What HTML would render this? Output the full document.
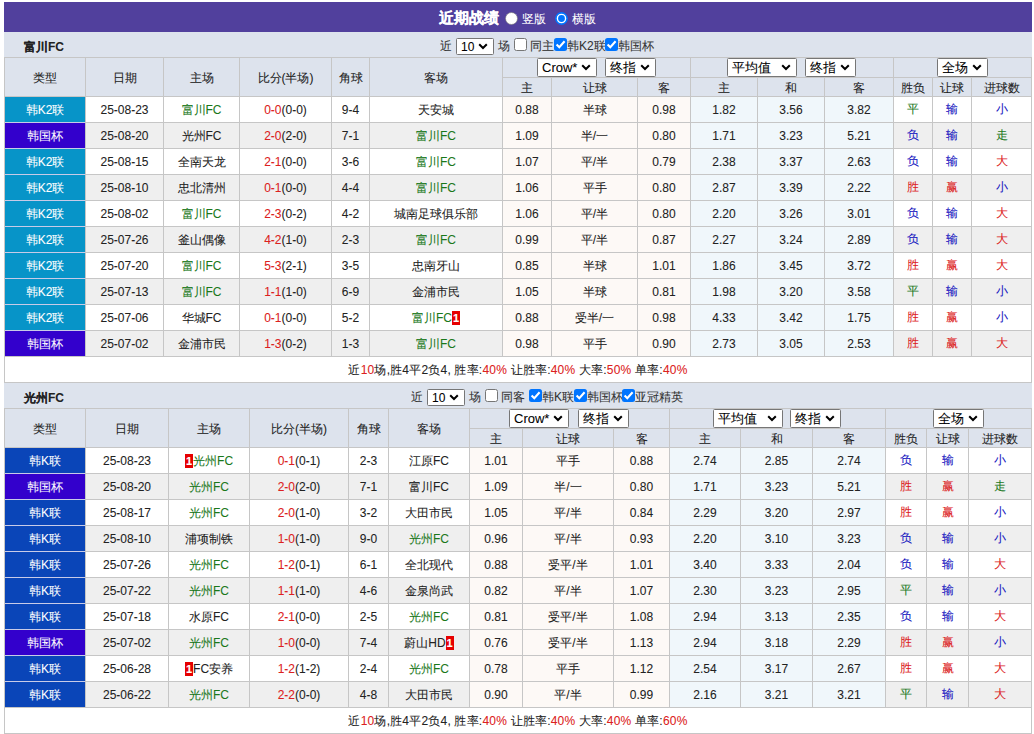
<!DOCTYPE html>
<html><head><meta charset="utf-8"><style>
html,body{margin:0;padding:0;background:#fff;width:1034px;height:734px;overflow:hidden}
body{font-family:"Liberation Sans",sans-serif;font-size:12px;color:#333;position:relative;-webkit-text-stroke:0.07px currentColor}
.a{position:absolute}
.t{position:absolute;white-space:nowrap}
.c{position:absolute;display:flex;align-items:center;justify-content:center;white-space:nowrap;font-size:12px;color:#222;line-height:14px}
.hd{color:#222;padding-top:1px;box-sizing:border-box}
.ty{color:#fff}
.sel{position:absolute;background:#fff;border:1px solid #767676;border-radius:1.5px;color:#000;display:flex;align-items:center;line-height:14px}
.sel span{padding-left:4px;flex:1;white-space:nowrap}
.chev{margin-right:5px}
.bd{display:inline-block;background:#e60000;color:#fff;font-weight:bold;font-size:11px;line-height:14px;height:14px;padding:0 1px}
</style></head><body>

<div class="a" style="left:4px;top:2px;width:1028px;height:30px;background:#51409d;"></div>
<div class="t" style="left:439px;top:9px;color:#fff;font-weight:bold;font-size:15px;line-height:17px;-webkit-text-stroke:0.2px #fff">近期战绩</div>
<svg class="a" style="left:505px;top:12px" width="13" height="13" viewBox="0 0 13 13"><circle cx="6.5" cy="6.5" r="6" fill="#fff" stroke="#767676" stroke-width="0.6"/></svg>
<div class="t" style="left:522px;top:12px;color:#fff;font-size:12px;line-height:14px">竖版</div>
<svg class="a" style="left:555px;top:12px" width="13" height="13" viewBox="0 0 13 13"><circle cx="6.5" cy="6.5" r="5.6" fill="#fff" stroke="#0075ff" stroke-width="1.6"/><circle cx="6.5" cy="6.5" r="3.4" fill="#0075ff"/></svg>
<div class="t" style="left:572px;top:12px;color:#fff;font-size:12px;line-height:14px">横版</div>
<div class="a" style="left:4px;top:32px;width:1028px;height:25px;background:#dde3ed;"></div>
<div class="t" style="left:24px;top:39px;font-weight:bold;font-size:12px;line-height:16px;color:#222">富川FC</div>
<div class="t" style="left:440px;top:39px;font-size:12px;line-height:14px">近</div><div class="sel" style="left:456px;top:38px;width:36px;height:15px;font-size:12px"><span>10</span><svg class="chev" width="10" height="7" viewBox="0 0 10 7"><path d="M1.2 1.2 L5 5 L8.8 1.2" fill="none" stroke="#000" stroke-width="2"/></svg></div><div class="t" style="left:498px;top:39px;font-size:12px;line-height:14px">场</div><svg class="a" style="left:514px;top:38px" width="13" height="13" viewBox="0 0 13 13"><rect x="0.5" y="0.5" width="12" height="12" rx="2" fill="#fff" stroke="#767676" stroke-width="1"/></svg><div class="t" style="left:530px;top:39px;font-size:12px;line-height:14px">同主</div><svg class="a" style="left:554px;top:38px" width="13" height="13" viewBox="0 0 13 13"><rect x="0" y="0" width="13" height="13" rx="2.5" fill="#0075ff"/><path d="M2.6 6.4 L5.3 9.2 L10.6 3.2" fill="none" stroke="#fff" stroke-width="2.1"/></svg><div class="t" style="left:567px;top:39px;font-size:12px;line-height:14px">韩K2联</div><svg class="a" style="left:605px;top:38px" width="13" height="13" viewBox="0 0 13 13"><rect x="0" y="0" width="13" height="13" rx="2.5" fill="#0075ff"/><path d="M2.6 6.4 L5.3 9.2 L10.6 3.2" fill="none" stroke="#fff" stroke-width="2.1"/></svg><div class="t" style="left:618px;top:39px;font-size:12px;line-height:14px">韩国杯</div>
<div class="a" style="left:4px;top:57px;width:1028px;height:40px;background:#dde3ed;"></div>
<div class="c hd" style="left:5px;top:58px;width:80px;height:38px;"><span>类型</span></div>
<div class="c hd" style="left:86px;top:58px;width:77px;height:38px;"><span>日期</span></div>
<div class="c hd" style="left:164px;top:58px;width:75px;height:38px;"><span>主场</span></div>
<div class="c hd" style="left:240px;top:58px;width:91px;height:38px;"><span>比分(半场)</span></div>
<div class="c hd" style="left:332px;top:58px;width:37px;height:38px;"><span>角球</span></div>
<div class="c hd" style="left:370px;top:58px;width:132px;height:38px;"><span>客场</span></div>
<div class="c hd" style="left:503px;top:78px;width:48px;height:18px;"><span>主</span></div>
<div class="c hd" style="left:552px;top:78px;width:85px;height:18px;"><span>让球</span></div>
<div class="c hd" style="left:638px;top:78px;width:52px;height:18px;"><span>客</span></div>
<div class="c hd" style="left:691px;top:78px;width:66px;height:18px;"><span>主</span></div>
<div class="c hd" style="left:758px;top:78px;width:66px;height:18px;"><span>和</span></div>
<div class="c hd" style="left:825px;top:78px;width:68px;height:18px;"><span>客</span></div>
<div class="c hd" style="left:894px;top:78px;width:38px;height:18px;"><span>胜负</span></div>
<div class="c hd" style="left:933px;top:78px;width:38px;height:18px;"><span>让球</span></div>
<div class="c hd" style="left:972px;top:78px;width:59px;height:18px;"><span>进球数</span></div>
<div class="a" style="left:5px;top:97px;width:1026px;height:25px;background:#ffffff;"></div>
<div class="c ty" style="left:5px;top:97px;width:80px;height:25px;background:#0794c8"><span>韩K2联</span></div>
<div class="c" style="left:86px;top:97px;width:77px;height:25px;"><span>25-08-23</span></div>
<div class="c" style="left:164px;top:97px;width:75px;height:25px;"><span><span style="color:#1a781a">富川FC</span></span></div>
<div class="c" style="left:240px;top:97px;width:91px;height:25px;"><span><span style="color:#dc2020">0-0</span>(0-0)</span></div>
<div class="c" style="left:332px;top:97px;width:37px;height:25px;"><span>9-4</span></div>
<div class="c" style="left:370px;top:97px;width:132px;height:25px;"><span><span style="color:#222">天安城</span></span></div>
<div class="c" style="left:503px;top:97px;width:48px;height:25px;background:#fdf9f6;"><span>0.88</span></div>
<div class="c" style="left:552px;top:97px;width:85px;height:25px;background:#fdf9f6;"><span>半球</span></div>
<div class="c" style="left:638px;top:97px;width:52px;height:25px;background:#fdf9f6;"><span>0.98</span></div>
<div class="c" style="left:691px;top:97px;width:66px;height:25px;background:#f0f7fb;"><span>1.82</span></div>
<div class="c" style="left:758px;top:97px;width:66px;height:25px;background:#f0f7fb;"><span>3.56</span></div>
<div class="c" style="left:825px;top:97px;width:68px;height:25px;background:#f0f7fb;"><span>3.82</span></div>
<div class="c" style="left:894px;top:97px;width:38px;height:25px;"><span><span style="color:#1a781a;position:relative;top:-1px">平</span></span></div>
<div class="c" style="left:933px;top:97px;width:38px;height:25px;"><span><span style="color:#1414c0;position:relative;top:-1px">输</span></span></div>
<div class="c" style="left:972px;top:97px;width:59px;height:25px;"><span><span style="color:#1414c0;position:relative;top:-1px">小</span></span></div>
<div class="a" style="left:5px;top:123px;width:1026px;height:25px;background:#efefef;"></div>
<div class="c ty" style="left:5px;top:123px;width:80px;height:25px;background:#3300cc"><span>韩国杯</span></div>
<div class="c" style="left:86px;top:123px;width:77px;height:25px;"><span>25-08-20</span></div>
<div class="c" style="left:164px;top:123px;width:75px;height:25px;"><span><span style="color:#222">光州FC</span></span></div>
<div class="c" style="left:240px;top:123px;width:91px;height:25px;"><span><span style="color:#dc2020">2-0</span>(2-0)</span></div>
<div class="c" style="left:332px;top:123px;width:37px;height:25px;"><span>7-1</span></div>
<div class="c" style="left:370px;top:123px;width:132px;height:25px;"><span><span style="color:#1a781a">富川FC</span></span></div>
<div class="c" style="left:503px;top:123px;width:48px;height:25px;background:#fdf9f6;"><span>1.09</span></div>
<div class="c" style="left:552px;top:123px;width:85px;height:25px;background:#fdf9f6;"><span>半/一</span></div>
<div class="c" style="left:638px;top:123px;width:52px;height:25px;background:#fdf9f6;"><span>0.80</span></div>
<div class="c" style="left:691px;top:123px;width:66px;height:25px;background:#f0f7fb;"><span>1.71</span></div>
<div class="c" style="left:758px;top:123px;width:66px;height:25px;background:#f0f7fb;"><span>3.23</span></div>
<div class="c" style="left:825px;top:123px;width:68px;height:25px;background:#f0f7fb;"><span>5.21</span></div>
<div class="c" style="left:894px;top:123px;width:38px;height:25px;"><span><span style="color:#1414c0;position:relative;top:-1px">负</span></span></div>
<div class="c" style="left:933px;top:123px;width:38px;height:25px;"><span><span style="color:#1414c0;position:relative;top:-1px">输</span></span></div>
<div class="c" style="left:972px;top:123px;width:59px;height:25px;"><span><span style="color:#1a781a;position:relative;top:-1px">走</span></span></div>
<div class="a" style="left:5px;top:149px;width:1026px;height:25px;background:#ffffff;"></div>
<div class="c ty" style="left:5px;top:149px;width:80px;height:25px;background:#0794c8"><span>韩K2联</span></div>
<div class="c" style="left:86px;top:149px;width:77px;height:25px;"><span>25-08-15</span></div>
<div class="c" style="left:164px;top:149px;width:75px;height:25px;"><span><span style="color:#222">全南天龙</span></span></div>
<div class="c" style="left:240px;top:149px;width:91px;height:25px;"><span><span style="color:#dc2020">2-1</span>(0-0)</span></div>
<div class="c" style="left:332px;top:149px;width:37px;height:25px;"><span>3-6</span></div>
<div class="c" style="left:370px;top:149px;width:132px;height:25px;"><span><span style="color:#1a781a">富川FC</span></span></div>
<div class="c" style="left:503px;top:149px;width:48px;height:25px;background:#fdf9f6;"><span>1.07</span></div>
<div class="c" style="left:552px;top:149px;width:85px;height:25px;background:#fdf9f6;"><span>平/半</span></div>
<div class="c" style="left:638px;top:149px;width:52px;height:25px;background:#fdf9f6;"><span>0.79</span></div>
<div class="c" style="left:691px;top:149px;width:66px;height:25px;background:#f0f7fb;"><span>2.38</span></div>
<div class="c" style="left:758px;top:149px;width:66px;height:25px;background:#f0f7fb;"><span>3.37</span></div>
<div class="c" style="left:825px;top:149px;width:68px;height:25px;background:#f0f7fb;"><span>2.63</span></div>
<div class="c" style="left:894px;top:149px;width:38px;height:25px;"><span><span style="color:#1414c0;position:relative;top:-1px">负</span></span></div>
<div class="c" style="left:933px;top:149px;width:38px;height:25px;"><span><span style="color:#1414c0;position:relative;top:-1px">输</span></span></div>
<div class="c" style="left:972px;top:149px;width:59px;height:25px;"><span><span style="color:#dc2020;position:relative;top:-1px">大</span></span></div>
<div class="a" style="left:5px;top:175px;width:1026px;height:25px;background:#efefef;"></div>
<div class="c ty" style="left:5px;top:175px;width:80px;height:25px;background:#0794c8"><span>韩K2联</span></div>
<div class="c" style="left:86px;top:175px;width:77px;height:25px;"><span>25-08-10</span></div>
<div class="c" style="left:164px;top:175px;width:75px;height:25px;"><span><span style="color:#222">忠北清州</span></span></div>
<div class="c" style="left:240px;top:175px;width:91px;height:25px;"><span><span style="color:#dc2020">0-1</span>(0-0)</span></div>
<div class="c" style="left:332px;top:175px;width:37px;height:25px;"><span>4-4</span></div>
<div class="c" style="left:370px;top:175px;width:132px;height:25px;"><span><span style="color:#1a781a">富川FC</span></span></div>
<div class="c" style="left:503px;top:175px;width:48px;height:25px;background:#fdf9f6;"><span>1.06</span></div>
<div class="c" style="left:552px;top:175px;width:85px;height:25px;background:#fdf9f6;"><span>平手</span></div>
<div class="c" style="left:638px;top:175px;width:52px;height:25px;background:#fdf9f6;"><span>0.80</span></div>
<div class="c" style="left:691px;top:175px;width:66px;height:25px;background:#f0f7fb;"><span>2.87</span></div>
<div class="c" style="left:758px;top:175px;width:66px;height:25px;background:#f0f7fb;"><span>3.39</span></div>
<div class="c" style="left:825px;top:175px;width:68px;height:25px;background:#f0f7fb;"><span>2.22</span></div>
<div class="c" style="left:894px;top:175px;width:38px;height:25px;"><span><span style="color:#dc2020;position:relative;top:-1px">胜</span></span></div>
<div class="c" style="left:933px;top:175px;width:38px;height:25px;"><span><span style="color:#dc2020;position:relative;top:-1px">赢</span></span></div>
<div class="c" style="left:972px;top:175px;width:59px;height:25px;"><span><span style="color:#1414c0;position:relative;top:-1px">小</span></span></div>
<div class="a" style="left:5px;top:201px;width:1026px;height:25px;background:#ffffff;"></div>
<div class="c ty" style="left:5px;top:201px;width:80px;height:25px;background:#0794c8"><span>韩K2联</span></div>
<div class="c" style="left:86px;top:201px;width:77px;height:25px;"><span>25-08-02</span></div>
<div class="c" style="left:164px;top:201px;width:75px;height:25px;"><span><span style="color:#1a781a">富川FC</span></span></div>
<div class="c" style="left:240px;top:201px;width:91px;height:25px;"><span><span style="color:#dc2020">2-3</span>(0-2)</span></div>
<div class="c" style="left:332px;top:201px;width:37px;height:25px;"><span>4-2</span></div>
<div class="c" style="left:370px;top:201px;width:132px;height:25px;"><span><span style="color:#222">城南足球俱乐部</span></span></div>
<div class="c" style="left:503px;top:201px;width:48px;height:25px;background:#fdf9f6;"><span>1.06</span></div>
<div class="c" style="left:552px;top:201px;width:85px;height:25px;background:#fdf9f6;"><span>平/半</span></div>
<div class="c" style="left:638px;top:201px;width:52px;height:25px;background:#fdf9f6;"><span>0.80</span></div>
<div class="c" style="left:691px;top:201px;width:66px;height:25px;background:#f0f7fb;"><span>2.20</span></div>
<div class="c" style="left:758px;top:201px;width:66px;height:25px;background:#f0f7fb;"><span>3.26</span></div>
<div class="c" style="left:825px;top:201px;width:68px;height:25px;background:#f0f7fb;"><span>3.01</span></div>
<div class="c" style="left:894px;top:201px;width:38px;height:25px;"><span><span style="color:#1414c0;position:relative;top:-1px">负</span></span></div>
<div class="c" style="left:933px;top:201px;width:38px;height:25px;"><span><span style="color:#1414c0;position:relative;top:-1px">输</span></span></div>
<div class="c" style="left:972px;top:201px;width:59px;height:25px;"><span><span style="color:#dc2020;position:relative;top:-1px">大</span></span></div>
<div class="a" style="left:5px;top:227px;width:1026px;height:25px;background:#efefef;"></div>
<div class="c ty" style="left:5px;top:227px;width:80px;height:25px;background:#0794c8"><span>韩K2联</span></div>
<div class="c" style="left:86px;top:227px;width:77px;height:25px;"><span>25-07-26</span></div>
<div class="c" style="left:164px;top:227px;width:75px;height:25px;"><span><span style="color:#222">釜山偶像</span></span></div>
<div class="c" style="left:240px;top:227px;width:91px;height:25px;"><span><span style="color:#dc2020">4-2</span>(1-0)</span></div>
<div class="c" style="left:332px;top:227px;width:37px;height:25px;"><span>2-3</span></div>
<div class="c" style="left:370px;top:227px;width:132px;height:25px;"><span><span style="color:#1a781a">富川FC</span></span></div>
<div class="c" style="left:503px;top:227px;width:48px;height:25px;background:#fdf9f6;"><span>0.99</span></div>
<div class="c" style="left:552px;top:227px;width:85px;height:25px;background:#fdf9f6;"><span>平/半</span></div>
<div class="c" style="left:638px;top:227px;width:52px;height:25px;background:#fdf9f6;"><span>0.87</span></div>
<div class="c" style="left:691px;top:227px;width:66px;height:25px;background:#f0f7fb;"><span>2.27</span></div>
<div class="c" style="left:758px;top:227px;width:66px;height:25px;background:#f0f7fb;"><span>3.24</span></div>
<div class="c" style="left:825px;top:227px;width:68px;height:25px;background:#f0f7fb;"><span>2.89</span></div>
<div class="c" style="left:894px;top:227px;width:38px;height:25px;"><span><span style="color:#1414c0;position:relative;top:-1px">负</span></span></div>
<div class="c" style="left:933px;top:227px;width:38px;height:25px;"><span><span style="color:#1414c0;position:relative;top:-1px">输</span></span></div>
<div class="c" style="left:972px;top:227px;width:59px;height:25px;"><span><span style="color:#dc2020;position:relative;top:-1px">大</span></span></div>
<div class="a" style="left:5px;top:253px;width:1026px;height:25px;background:#ffffff;"></div>
<div class="c ty" style="left:5px;top:253px;width:80px;height:25px;background:#0794c8"><span>韩K2联</span></div>
<div class="c" style="left:86px;top:253px;width:77px;height:25px;"><span>25-07-20</span></div>
<div class="c" style="left:164px;top:253px;width:75px;height:25px;"><span><span style="color:#1a781a">富川FC</span></span></div>
<div class="c" style="left:240px;top:253px;width:91px;height:25px;"><span><span style="color:#dc2020">5-3</span>(2-1)</span></div>
<div class="c" style="left:332px;top:253px;width:37px;height:25px;"><span>3-5</span></div>
<div class="c" style="left:370px;top:253px;width:132px;height:25px;"><span><span style="color:#222">忠南牙山</span></span></div>
<div class="c" style="left:503px;top:253px;width:48px;height:25px;background:#fdf9f6;"><span>0.85</span></div>
<div class="c" style="left:552px;top:253px;width:85px;height:25px;background:#fdf9f6;"><span>半球</span></div>
<div class="c" style="left:638px;top:253px;width:52px;height:25px;background:#fdf9f6;"><span>1.01</span></div>
<div class="c" style="left:691px;top:253px;width:66px;height:25px;background:#f0f7fb;"><span>1.86</span></div>
<div class="c" style="left:758px;top:253px;width:66px;height:25px;background:#f0f7fb;"><span>3.45</span></div>
<div class="c" style="left:825px;top:253px;width:68px;height:25px;background:#f0f7fb;"><span>3.72</span></div>
<div class="c" style="left:894px;top:253px;width:38px;height:25px;"><span><span style="color:#dc2020;position:relative;top:-1px">胜</span></span></div>
<div class="c" style="left:933px;top:253px;width:38px;height:25px;"><span><span style="color:#dc2020;position:relative;top:-1px">赢</span></span></div>
<div class="c" style="left:972px;top:253px;width:59px;height:25px;"><span><span style="color:#dc2020;position:relative;top:-1px">大</span></span></div>
<div class="a" style="left:5px;top:279px;width:1026px;height:25px;background:#efefef;"></div>
<div class="c ty" style="left:5px;top:279px;width:80px;height:25px;background:#0794c8"><span>韩K2联</span></div>
<div class="c" style="left:86px;top:279px;width:77px;height:25px;"><span>25-07-13</span></div>
<div class="c" style="left:164px;top:279px;width:75px;height:25px;"><span><span style="color:#1a781a">富川FC</span></span></div>
<div class="c" style="left:240px;top:279px;width:91px;height:25px;"><span><span style="color:#dc2020">1-1</span>(1-0)</span></div>
<div class="c" style="left:332px;top:279px;width:37px;height:25px;"><span>6-9</span></div>
<div class="c" style="left:370px;top:279px;width:132px;height:25px;"><span><span style="color:#222">金浦市民</span></span></div>
<div class="c" style="left:503px;top:279px;width:48px;height:25px;background:#fdf9f6;"><span>1.05</span></div>
<div class="c" style="left:552px;top:279px;width:85px;height:25px;background:#fdf9f6;"><span>半球</span></div>
<div class="c" style="left:638px;top:279px;width:52px;height:25px;background:#fdf9f6;"><span>0.81</span></div>
<div class="c" style="left:691px;top:279px;width:66px;height:25px;background:#f0f7fb;"><span>1.98</span></div>
<div class="c" style="left:758px;top:279px;width:66px;height:25px;background:#f0f7fb;"><span>3.20</span></div>
<div class="c" style="left:825px;top:279px;width:68px;height:25px;background:#f0f7fb;"><span>3.58</span></div>
<div class="c" style="left:894px;top:279px;width:38px;height:25px;"><span><span style="color:#1a781a;position:relative;top:-1px">平</span></span></div>
<div class="c" style="left:933px;top:279px;width:38px;height:25px;"><span><span style="color:#1414c0;position:relative;top:-1px">输</span></span></div>
<div class="c" style="left:972px;top:279px;width:59px;height:25px;"><span><span style="color:#1414c0;position:relative;top:-1px">小</span></span></div>
<div class="a" style="left:5px;top:305px;width:1026px;height:25px;background:#ffffff;"></div>
<div class="c ty" style="left:5px;top:305px;width:80px;height:25px;background:#0794c8"><span>韩K2联</span></div>
<div class="c" style="left:86px;top:305px;width:77px;height:25px;"><span>25-07-06</span></div>
<div class="c" style="left:164px;top:305px;width:75px;height:25px;"><span><span style="color:#222">华城FC</span></span></div>
<div class="c" style="left:240px;top:305px;width:91px;height:25px;"><span><span style="color:#dc2020">0-1</span>(0-0)</span></div>
<div class="c" style="left:332px;top:305px;width:37px;height:25px;"><span>5-2</span></div>
<div class="c" style="left:370px;top:305px;width:132px;height:25px;"><span><span style="color:#1a781a">富川FC</span><span class="bd">1</span></span></div>
<div class="c" style="left:503px;top:305px;width:48px;height:25px;background:#fdf9f6;"><span>0.88</span></div>
<div class="c" style="left:552px;top:305px;width:85px;height:25px;background:#fdf9f6;"><span>受半/一</span></div>
<div class="c" style="left:638px;top:305px;width:52px;height:25px;background:#fdf9f6;"><span>0.98</span></div>
<div class="c" style="left:691px;top:305px;width:66px;height:25px;background:#f0f7fb;"><span>4.33</span></div>
<div class="c" style="left:758px;top:305px;width:66px;height:25px;background:#f0f7fb;"><span>3.42</span></div>
<div class="c" style="left:825px;top:305px;width:68px;height:25px;background:#f0f7fb;"><span>1.75</span></div>
<div class="c" style="left:894px;top:305px;width:38px;height:25px;"><span><span style="color:#dc2020;position:relative;top:-1px">胜</span></span></div>
<div class="c" style="left:933px;top:305px;width:38px;height:25px;"><span><span style="color:#dc2020;position:relative;top:-1px">赢</span></span></div>
<div class="c" style="left:972px;top:305px;width:59px;height:25px;"><span><span style="color:#1414c0;position:relative;top:-1px">小</span></span></div>
<div class="a" style="left:5px;top:331px;width:1026px;height:25px;background:#efefef;"></div>
<div class="c ty" style="left:5px;top:331px;width:80px;height:25px;background:#3300cc"><span>韩国杯</span></div>
<div class="c" style="left:86px;top:331px;width:77px;height:25px;"><span>25-07-02</span></div>
<div class="c" style="left:164px;top:331px;width:75px;height:25px;"><span><span style="color:#222">金浦市民</span></span></div>
<div class="c" style="left:240px;top:331px;width:91px;height:25px;"><span><span style="color:#dc2020">1-3</span>(0-2)</span></div>
<div class="c" style="left:332px;top:331px;width:37px;height:25px;"><span>1-3</span></div>
<div class="c" style="left:370px;top:331px;width:132px;height:25px;"><span><span style="color:#1a781a">富川FC</span></span></div>
<div class="c" style="left:503px;top:331px;width:48px;height:25px;background:#fdf9f6;"><span>0.98</span></div>
<div class="c" style="left:552px;top:331px;width:85px;height:25px;background:#fdf9f6;"><span>平手</span></div>
<div class="c" style="left:638px;top:331px;width:52px;height:25px;background:#fdf9f6;"><span>0.90</span></div>
<div class="c" style="left:691px;top:331px;width:66px;height:25px;background:#f0f7fb;"><span>2.73</span></div>
<div class="c" style="left:758px;top:331px;width:66px;height:25px;background:#f0f7fb;"><span>3.05</span></div>
<div class="c" style="left:825px;top:331px;width:68px;height:25px;background:#f0f7fb;"><span>2.53</span></div>
<div class="c" style="left:894px;top:331px;width:38px;height:25px;"><span><span style="color:#dc2020;position:relative;top:-1px">胜</span></span></div>
<div class="c" style="left:933px;top:331px;width:38px;height:25px;"><span><span style="color:#dc2020;position:relative;top:-1px">赢</span></span></div>
<div class="c" style="left:972px;top:331px;width:59px;height:25px;"><span><span style="color:#dc2020;position:relative;top:-1px">大</span></span></div>
<div class="a" style="left:5px;top:357px;width:1026px;height:25px;background:#fff;"></div>
<div class="c sm" style="left:5px;top:357px;width:1026px;height:25px;padding-top:1px;box-sizing:border-box;letter-spacing:0.2px"><span>近<span style="color:#dc2020">10</span>场,胜4平2负4, 胜率:<span style="color:#dc2020">40%</span> 让胜率:<span style="color:#dc2020">40%</span> 大率:<span style="color:#dc2020">50%</span> 单率:<span style="color:#dc2020">40%</span></span></div>
<div class="a" style="left:4px;top:57px;width:1028px;height:1px;background:#c6c6c6;"></div>
<div class="a" style="left:4px;top:96px;width:1028px;height:1px;background:#c6c6c6;"></div>
<div class="a" style="left:4px;top:356px;width:1028px;height:1px;background:#c6c6c6;"></div>
<div class="a" style="left:4px;top:382px;width:1028px;height:1px;background:#c6c6c6;"></div>
<div class="a" style="left:502px;top:77px;width:529px;height:1px;background:#c6c6c6;"></div>
<div class="a" style="left:85px;top:122px;width:946px;height:1px;background:#c6c6c6;"></div>
<div class="a" style="left:5px;top:122px;width:80px;height:1px;background:#c8cbe8;"></div>
<div class="a" style="left:85px;top:148px;width:946px;height:1px;background:#c6c6c6;"></div>
<div class="a" style="left:5px;top:148px;width:80px;height:1px;background:#c8cbe8;"></div>
<div class="a" style="left:85px;top:174px;width:946px;height:1px;background:#c6c6c6;"></div>
<div class="a" style="left:5px;top:174px;width:80px;height:1px;background:#c8cbe8;"></div>
<div class="a" style="left:85px;top:200px;width:946px;height:1px;background:#c6c6c6;"></div>
<div class="a" style="left:5px;top:200px;width:80px;height:1px;background:#c8cbe8;"></div>
<div class="a" style="left:85px;top:226px;width:946px;height:1px;background:#c6c6c6;"></div>
<div class="a" style="left:5px;top:226px;width:80px;height:1px;background:#c8cbe8;"></div>
<div class="a" style="left:85px;top:252px;width:946px;height:1px;background:#c6c6c6;"></div>
<div class="a" style="left:5px;top:252px;width:80px;height:1px;background:#c8cbe8;"></div>
<div class="a" style="left:85px;top:278px;width:946px;height:1px;background:#c6c6c6;"></div>
<div class="a" style="left:5px;top:278px;width:80px;height:1px;background:#c8cbe8;"></div>
<div class="a" style="left:85px;top:304px;width:946px;height:1px;background:#c6c6c6;"></div>
<div class="a" style="left:5px;top:304px;width:80px;height:1px;background:#c8cbe8;"></div>
<div class="a" style="left:85px;top:330px;width:946px;height:1px;background:#c6c6c6;"></div>
<div class="a" style="left:5px;top:330px;width:80px;height:1px;background:#c8cbe8;"></div>
<div class="a" style="left:4px;top:57px;width:1px;height:299px;background:#c6c6c6;"></div>
<div class="a" style="left:85px;top:57px;width:1px;height:299px;background:#c6c6c6;"></div>
<div class="a" style="left:163px;top:57px;width:1px;height:299px;background:#c6c6c6;"></div>
<div class="a" style="left:239px;top:57px;width:1px;height:299px;background:#c6c6c6;"></div>
<div class="a" style="left:331px;top:57px;width:1px;height:299px;background:#c6c6c6;"></div>
<div class="a" style="left:369px;top:57px;width:1px;height:299px;background:#c6c6c6;"></div>
<div class="a" style="left:502px;top:57px;width:1px;height:299px;background:#c6c6c6;"></div>
<div class="a" style="left:551px;top:77px;width:1px;height:279px;background:#c6c6c6;"></div>
<div class="a" style="left:637px;top:77px;width:1px;height:279px;background:#c6c6c6;"></div>
<div class="a" style="left:690px;top:57px;width:1px;height:299px;background:#c6c6c6;"></div>
<div class="a" style="left:757px;top:77px;width:1px;height:279px;background:#c6c6c6;"></div>
<div class="a" style="left:824px;top:77px;width:1px;height:279px;background:#c6c6c6;"></div>
<div class="a" style="left:893px;top:57px;width:1px;height:299px;background:#c6c6c6;"></div>
<div class="a" style="left:932px;top:77px;width:1px;height:279px;background:#c6c6c6;"></div>
<div class="a" style="left:971px;top:77px;width:1px;height:279px;background:#c6c6c6;"></div>
<div class="a" style="left:1031px;top:57px;width:1px;height:299px;background:#c6c6c6;"></div>
<div class="a" style="left:4px;top:356px;width:1px;height:27px;background:#c6c6c6;"></div>
<div class="a" style="left:1031px;top:356px;width:1px;height:27px;background:#c6c6c6;"></div>
<div class="sel" style="left:537px;top:58px;width:58px;height:17px;font-size:13px"><span>Crow*</span><svg class="chev" width="10" height="7" viewBox="0 0 10 7"><path d="M1.2 1.2 L5 5 L8.8 1.2" fill="none" stroke="#000" stroke-width="2"/></svg></div>
<div class="sel" style="left:605px;top:58px;width:49px;height:17px;font-size:13px"><span>终指</span><svg class="chev" width="10" height="7" viewBox="0 0 10 7"><path d="M1.2 1.2 L5 5 L8.8 1.2" fill="none" stroke="#000" stroke-width="2"/></svg></div>
<div class="sel" style="left:727px;top:58px;width:68px;height:17px;font-size:13px"><span>平均值</span><svg class="chev" width="10" height="7" viewBox="0 0 10 7"><path d="M1.2 1.2 L5 5 L8.8 1.2" fill="none" stroke="#000" stroke-width="2"/></svg></div>
<div class="sel" style="left:805px;top:58px;width:49px;height:17px;font-size:13px"><span>终指</span><svg class="chev" width="10" height="7" viewBox="0 0 10 7"><path d="M1.2 1.2 L5 5 L8.8 1.2" fill="none" stroke="#000" stroke-width="2"/></svg></div>
<div class="sel" style="left:937px;top:58px;width:49px;height:17px;font-size:13px"><span>全场</span><svg class="chev" width="10" height="7" viewBox="0 0 10 7"><path d="M1.2 1.2 L5 5 L8.8 1.2" fill="none" stroke="#000" stroke-width="2"/></svg></div>
<div class="a" style="left:4px;top:383px;width:1028px;height:25px;background:#dde3ed;"></div>
<div class="t" style="left:24px;top:390px;font-weight:bold;font-size:12px;line-height:16px;color:#222">光州FC</div>
<div class="t" style="left:411px;top:390px;font-size:12px;line-height:14px">近</div><div class="sel" style="left:427px;top:389px;width:36px;height:15px;font-size:12px"><span>10</span><svg class="chev" width="10" height="7" viewBox="0 0 10 7"><path d="M1.2 1.2 L5 5 L8.8 1.2" fill="none" stroke="#000" stroke-width="2"/></svg></div><div class="t" style="left:469px;top:390px;font-size:12px;line-height:14px">场</div><svg class="a" style="left:485px;top:389px" width="13" height="13" viewBox="0 0 13 13"><rect x="0.5" y="0.5" width="12" height="12" rx="2" fill="#fff" stroke="#767676" stroke-width="1"/></svg><div class="t" style="left:501px;top:390px;font-size:12px;line-height:14px">同客</div><svg class="a" style="left:529px;top:389px" width="13" height="13" viewBox="0 0 13 13"><rect x="0" y="0" width="13" height="13" rx="2.5" fill="#0075ff"/><path d="M2.6 6.4 L5.3 9.2 L10.6 3.2" fill="none" stroke="#fff" stroke-width="2.1"/></svg><div class="t" style="left:542px;top:390px;font-size:12px;line-height:14px">韩K联</div><svg class="a" style="left:574px;top:389px" width="13" height="13" viewBox="0 0 13 13"><rect x="0" y="0" width="13" height="13" rx="2.5" fill="#0075ff"/><path d="M2.6 6.4 L5.3 9.2 L10.6 3.2" fill="none" stroke="#fff" stroke-width="2.1"/></svg><div class="t" style="left:587px;top:390px;font-size:12px;line-height:14px">韩国杯</div><svg class="a" style="left:622px;top:389px" width="13" height="13" viewBox="0 0 13 13"><rect x="0" y="0" width="13" height="13" rx="2.5" fill="#0075ff"/><path d="M2.6 6.4 L5.3 9.2 L10.6 3.2" fill="none" stroke="#fff" stroke-width="2.1"/></svg><div class="t" style="left:635px;top:390px;font-size:12px;line-height:14px">亚冠精英</div>
<div class="a" style="left:4px;top:408px;width:1028px;height:40px;background:#dde3ed;"></div>
<div class="c hd" style="left:5px;top:409px;width:80px;height:38px;"><span>类型</span></div>
<div class="c hd" style="left:86px;top:409px;width:82px;height:38px;"><span>日期</span></div>
<div class="c hd" style="left:169px;top:409px;width:80px;height:38px;"><span>主场</span></div>
<div class="c hd" style="left:250px;top:409px;width:98px;height:38px;"><span>比分(半场)</span></div>
<div class="c hd" style="left:349px;top:409px;width:39px;height:38px;"><span>角球</span></div>
<div class="c hd" style="left:389px;top:409px;width:80px;height:38px;"><span>客场</span></div>
<div class="c hd" style="left:470px;top:429px;width:52px;height:18px;"><span>主</span></div>
<div class="c hd" style="left:523px;top:429px;width:90px;height:18px;"><span>让球</span></div>
<div class="c hd" style="left:614px;top:429px;width:55px;height:18px;"><span>客</span></div>
<div class="c hd" style="left:670px;top:429px;width:70px;height:18px;"><span>主</span></div>
<div class="c hd" style="left:741px;top:429px;width:71px;height:18px;"><span>和</span></div>
<div class="c hd" style="left:813px;top:429px;width:72px;height:18px;"><span>客</span></div>
<div class="c hd" style="left:886px;top:429px;width:40px;height:18px;"><span>胜负</span></div>
<div class="c hd" style="left:927px;top:429px;width:41px;height:18px;"><span>让球</span></div>
<div class="c hd" style="left:969px;top:429px;width:62px;height:18px;"><span>进球数</span></div>
<div class="a" style="left:5px;top:448px;width:1026px;height:25px;background:#ffffff;"></div>
<div class="c ty" style="left:5px;top:448px;width:80px;height:25px;background:#0a45b8"><span>韩K联</span></div>
<div class="c" style="left:86px;top:448px;width:82px;height:25px;"><span>25-08-23</span></div>
<div class="c" style="left:169px;top:448px;width:80px;height:25px;"><span><span class="bd">1</span><span style="color:#1a781a">光州FC</span></span></div>
<div class="c" style="left:250px;top:448px;width:98px;height:25px;"><span><span style="color:#dc2020">0-1</span>(0-1)</span></div>
<div class="c" style="left:349px;top:448px;width:39px;height:25px;"><span>2-3</span></div>
<div class="c" style="left:389px;top:448px;width:80px;height:25px;"><span><span style="color:#222">江原FC</span></span></div>
<div class="c" style="left:470px;top:448px;width:52px;height:25px;background:#fdf9f6;"><span>1.01</span></div>
<div class="c" style="left:523px;top:448px;width:90px;height:25px;background:#fdf9f6;"><span>平手</span></div>
<div class="c" style="left:614px;top:448px;width:55px;height:25px;background:#fdf9f6;"><span>0.88</span></div>
<div class="c" style="left:670px;top:448px;width:70px;height:25px;background:#f0f7fb;"><span>2.74</span></div>
<div class="c" style="left:741px;top:448px;width:71px;height:25px;background:#f0f7fb;"><span>2.85</span></div>
<div class="c" style="left:813px;top:448px;width:72px;height:25px;background:#f0f7fb;"><span>2.74</span></div>
<div class="c" style="left:886px;top:448px;width:40px;height:25px;"><span><span style="color:#1414c0;position:relative;top:-1px">负</span></span></div>
<div class="c" style="left:927px;top:448px;width:41px;height:25px;"><span><span style="color:#1414c0;position:relative;top:-1px">输</span></span></div>
<div class="c" style="left:969px;top:448px;width:62px;height:25px;"><span><span style="color:#1414c0;position:relative;top:-1px">小</span></span></div>
<div class="a" style="left:5px;top:474px;width:1026px;height:25px;background:#efefef;"></div>
<div class="c ty" style="left:5px;top:474px;width:80px;height:25px;background:#3300cc"><span>韩国杯</span></div>
<div class="c" style="left:86px;top:474px;width:82px;height:25px;"><span>25-08-20</span></div>
<div class="c" style="left:169px;top:474px;width:80px;height:25px;"><span><span style="color:#1a781a">光州FC</span></span></div>
<div class="c" style="left:250px;top:474px;width:98px;height:25px;"><span><span style="color:#dc2020">2-0</span>(2-0)</span></div>
<div class="c" style="left:349px;top:474px;width:39px;height:25px;"><span>7-1</span></div>
<div class="c" style="left:389px;top:474px;width:80px;height:25px;"><span><span style="color:#222">富川FC</span></span></div>
<div class="c" style="left:470px;top:474px;width:52px;height:25px;background:#fdf9f6;"><span>1.09</span></div>
<div class="c" style="left:523px;top:474px;width:90px;height:25px;background:#fdf9f6;"><span>半/一</span></div>
<div class="c" style="left:614px;top:474px;width:55px;height:25px;background:#fdf9f6;"><span>0.80</span></div>
<div class="c" style="left:670px;top:474px;width:70px;height:25px;background:#f0f7fb;"><span>1.71</span></div>
<div class="c" style="left:741px;top:474px;width:71px;height:25px;background:#f0f7fb;"><span>3.23</span></div>
<div class="c" style="left:813px;top:474px;width:72px;height:25px;background:#f0f7fb;"><span>5.21</span></div>
<div class="c" style="left:886px;top:474px;width:40px;height:25px;"><span><span style="color:#dc2020;position:relative;top:-1px">胜</span></span></div>
<div class="c" style="left:927px;top:474px;width:41px;height:25px;"><span><span style="color:#dc2020;position:relative;top:-1px">赢</span></span></div>
<div class="c" style="left:969px;top:474px;width:62px;height:25px;"><span><span style="color:#1a781a;position:relative;top:-1px">走</span></span></div>
<div class="a" style="left:5px;top:500px;width:1026px;height:25px;background:#ffffff;"></div>
<div class="c ty" style="left:5px;top:500px;width:80px;height:25px;background:#0a45b8"><span>韩K联</span></div>
<div class="c" style="left:86px;top:500px;width:82px;height:25px;"><span>25-08-17</span></div>
<div class="c" style="left:169px;top:500px;width:80px;height:25px;"><span><span style="color:#1a781a">光州FC</span></span></div>
<div class="c" style="left:250px;top:500px;width:98px;height:25px;"><span><span style="color:#dc2020">2-0</span>(1-0)</span></div>
<div class="c" style="left:349px;top:500px;width:39px;height:25px;"><span>3-2</span></div>
<div class="c" style="left:389px;top:500px;width:80px;height:25px;"><span><span style="color:#222">大田市民</span></span></div>
<div class="c" style="left:470px;top:500px;width:52px;height:25px;background:#fdf9f6;"><span>1.05</span></div>
<div class="c" style="left:523px;top:500px;width:90px;height:25px;background:#fdf9f6;"><span>平/半</span></div>
<div class="c" style="left:614px;top:500px;width:55px;height:25px;background:#fdf9f6;"><span>0.84</span></div>
<div class="c" style="left:670px;top:500px;width:70px;height:25px;background:#f0f7fb;"><span>2.29</span></div>
<div class="c" style="left:741px;top:500px;width:71px;height:25px;background:#f0f7fb;"><span>3.20</span></div>
<div class="c" style="left:813px;top:500px;width:72px;height:25px;background:#f0f7fb;"><span>2.97</span></div>
<div class="c" style="left:886px;top:500px;width:40px;height:25px;"><span><span style="color:#dc2020;position:relative;top:-1px">胜</span></span></div>
<div class="c" style="left:927px;top:500px;width:41px;height:25px;"><span><span style="color:#dc2020;position:relative;top:-1px">赢</span></span></div>
<div class="c" style="left:969px;top:500px;width:62px;height:25px;"><span><span style="color:#1414c0;position:relative;top:-1px">小</span></span></div>
<div class="a" style="left:5px;top:526px;width:1026px;height:25px;background:#efefef;"></div>
<div class="c ty" style="left:5px;top:526px;width:80px;height:25px;background:#0a45b8"><span>韩K联</span></div>
<div class="c" style="left:86px;top:526px;width:82px;height:25px;"><span>25-08-10</span></div>
<div class="c" style="left:169px;top:526px;width:80px;height:25px;"><span><span style="color:#222">浦项制铁</span></span></div>
<div class="c" style="left:250px;top:526px;width:98px;height:25px;"><span><span style="color:#dc2020">1-0</span>(1-0)</span></div>
<div class="c" style="left:349px;top:526px;width:39px;height:25px;"><span>9-0</span></div>
<div class="c" style="left:389px;top:526px;width:80px;height:25px;"><span><span style="color:#1a781a">光州FC</span></span></div>
<div class="c" style="left:470px;top:526px;width:52px;height:25px;background:#fdf9f6;"><span>0.96</span></div>
<div class="c" style="left:523px;top:526px;width:90px;height:25px;background:#fdf9f6;"><span>平/半</span></div>
<div class="c" style="left:614px;top:526px;width:55px;height:25px;background:#fdf9f6;"><span>0.93</span></div>
<div class="c" style="left:670px;top:526px;width:70px;height:25px;background:#f0f7fb;"><span>2.20</span></div>
<div class="c" style="left:741px;top:526px;width:71px;height:25px;background:#f0f7fb;"><span>3.10</span></div>
<div class="c" style="left:813px;top:526px;width:72px;height:25px;background:#f0f7fb;"><span>3.23</span></div>
<div class="c" style="left:886px;top:526px;width:40px;height:25px;"><span><span style="color:#1414c0;position:relative;top:-1px">负</span></span></div>
<div class="c" style="left:927px;top:526px;width:41px;height:25px;"><span><span style="color:#1414c0;position:relative;top:-1px">输</span></span></div>
<div class="c" style="left:969px;top:526px;width:62px;height:25px;"><span><span style="color:#1414c0;position:relative;top:-1px">小</span></span></div>
<div class="a" style="left:5px;top:552px;width:1026px;height:25px;background:#ffffff;"></div>
<div class="c ty" style="left:5px;top:552px;width:80px;height:25px;background:#0a45b8"><span>韩K联</span></div>
<div class="c" style="left:86px;top:552px;width:82px;height:25px;"><span>25-07-26</span></div>
<div class="c" style="left:169px;top:552px;width:80px;height:25px;"><span><span style="color:#1a781a">光州FC</span></span></div>
<div class="c" style="left:250px;top:552px;width:98px;height:25px;"><span><span style="color:#dc2020">1-2</span>(0-1)</span></div>
<div class="c" style="left:349px;top:552px;width:39px;height:25px;"><span>6-1</span></div>
<div class="c" style="left:389px;top:552px;width:80px;height:25px;"><span><span style="color:#222">全北现代</span></span></div>
<div class="c" style="left:470px;top:552px;width:52px;height:25px;background:#fdf9f6;"><span>0.88</span></div>
<div class="c" style="left:523px;top:552px;width:90px;height:25px;background:#fdf9f6;"><span>受平/半</span></div>
<div class="c" style="left:614px;top:552px;width:55px;height:25px;background:#fdf9f6;"><span>1.01</span></div>
<div class="c" style="left:670px;top:552px;width:70px;height:25px;background:#f0f7fb;"><span>3.40</span></div>
<div class="c" style="left:741px;top:552px;width:71px;height:25px;background:#f0f7fb;"><span>3.33</span></div>
<div class="c" style="left:813px;top:552px;width:72px;height:25px;background:#f0f7fb;"><span>2.04</span></div>
<div class="c" style="left:886px;top:552px;width:40px;height:25px;"><span><span style="color:#1414c0;position:relative;top:-1px">负</span></span></div>
<div class="c" style="left:927px;top:552px;width:41px;height:25px;"><span><span style="color:#1414c0;position:relative;top:-1px">输</span></span></div>
<div class="c" style="left:969px;top:552px;width:62px;height:25px;"><span><span style="color:#dc2020;position:relative;top:-1px">大</span></span></div>
<div class="a" style="left:5px;top:578px;width:1026px;height:25px;background:#efefef;"></div>
<div class="c ty" style="left:5px;top:578px;width:80px;height:25px;background:#0a45b8"><span>韩K联</span></div>
<div class="c" style="left:86px;top:578px;width:82px;height:25px;"><span>25-07-22</span></div>
<div class="c" style="left:169px;top:578px;width:80px;height:25px;"><span><span style="color:#1a781a">光州FC</span></span></div>
<div class="c" style="left:250px;top:578px;width:98px;height:25px;"><span><span style="color:#dc2020">1-1</span>(1-0)</span></div>
<div class="c" style="left:349px;top:578px;width:39px;height:25px;"><span>4-6</span></div>
<div class="c" style="left:389px;top:578px;width:80px;height:25px;"><span><span style="color:#222">金泉尚武</span></span></div>
<div class="c" style="left:470px;top:578px;width:52px;height:25px;background:#fdf9f6;"><span>0.82</span></div>
<div class="c" style="left:523px;top:578px;width:90px;height:25px;background:#fdf9f6;"><span>平/半</span></div>
<div class="c" style="left:614px;top:578px;width:55px;height:25px;background:#fdf9f6;"><span>1.07</span></div>
<div class="c" style="left:670px;top:578px;width:70px;height:25px;background:#f0f7fb;"><span>2.30</span></div>
<div class="c" style="left:741px;top:578px;width:71px;height:25px;background:#f0f7fb;"><span>3.23</span></div>
<div class="c" style="left:813px;top:578px;width:72px;height:25px;background:#f0f7fb;"><span>2.95</span></div>
<div class="c" style="left:886px;top:578px;width:40px;height:25px;"><span><span style="color:#1a781a;position:relative;top:-1px">平</span></span></div>
<div class="c" style="left:927px;top:578px;width:41px;height:25px;"><span><span style="color:#1414c0;position:relative;top:-1px">输</span></span></div>
<div class="c" style="left:969px;top:578px;width:62px;height:25px;"><span><span style="color:#1414c0;position:relative;top:-1px">小</span></span></div>
<div class="a" style="left:5px;top:604px;width:1026px;height:25px;background:#ffffff;"></div>
<div class="c ty" style="left:5px;top:604px;width:80px;height:25px;background:#0a45b8"><span>韩K联</span></div>
<div class="c" style="left:86px;top:604px;width:82px;height:25px;"><span>25-07-18</span></div>
<div class="c" style="left:169px;top:604px;width:80px;height:25px;"><span><span style="color:#222">水原FC</span></span></div>
<div class="c" style="left:250px;top:604px;width:98px;height:25px;"><span><span style="color:#dc2020">2-1</span>(0-0)</span></div>
<div class="c" style="left:349px;top:604px;width:39px;height:25px;"><span>2-5</span></div>
<div class="c" style="left:389px;top:604px;width:80px;height:25px;"><span><span style="color:#1a781a">光州FC</span></span></div>
<div class="c" style="left:470px;top:604px;width:52px;height:25px;background:#fdf9f6;"><span>0.81</span></div>
<div class="c" style="left:523px;top:604px;width:90px;height:25px;background:#fdf9f6;"><span>受平/半</span></div>
<div class="c" style="left:614px;top:604px;width:55px;height:25px;background:#fdf9f6;"><span>1.08</span></div>
<div class="c" style="left:670px;top:604px;width:70px;height:25px;background:#f0f7fb;"><span>2.94</span></div>
<div class="c" style="left:741px;top:604px;width:71px;height:25px;background:#f0f7fb;"><span>3.13</span></div>
<div class="c" style="left:813px;top:604px;width:72px;height:25px;background:#f0f7fb;"><span>2.35</span></div>
<div class="c" style="left:886px;top:604px;width:40px;height:25px;"><span><span style="color:#1414c0;position:relative;top:-1px">负</span></span></div>
<div class="c" style="left:927px;top:604px;width:41px;height:25px;"><span><span style="color:#1414c0;position:relative;top:-1px">输</span></span></div>
<div class="c" style="left:969px;top:604px;width:62px;height:25px;"><span><span style="color:#dc2020;position:relative;top:-1px">大</span></span></div>
<div class="a" style="left:5px;top:630px;width:1026px;height:25px;background:#efefef;"></div>
<div class="c ty" style="left:5px;top:630px;width:80px;height:25px;background:#3300cc"><span>韩国杯</span></div>
<div class="c" style="left:86px;top:630px;width:82px;height:25px;"><span>25-07-02</span></div>
<div class="c" style="left:169px;top:630px;width:80px;height:25px;"><span><span style="color:#1a781a">光州FC</span></span></div>
<div class="c" style="left:250px;top:630px;width:98px;height:25px;"><span><span style="color:#dc2020">1-0</span>(0-0)</span></div>
<div class="c" style="left:349px;top:630px;width:39px;height:25px;"><span>7-4</span></div>
<div class="c" style="left:389px;top:630px;width:80px;height:25px;"><span><span style="color:#222">蔚山HD</span><span class="bd">1</span></span></div>
<div class="c" style="left:470px;top:630px;width:52px;height:25px;background:#fdf9f6;"><span>0.76</span></div>
<div class="c" style="left:523px;top:630px;width:90px;height:25px;background:#fdf9f6;"><span>受平/半</span></div>
<div class="c" style="left:614px;top:630px;width:55px;height:25px;background:#fdf9f6;"><span>1.13</span></div>
<div class="c" style="left:670px;top:630px;width:70px;height:25px;background:#f0f7fb;"><span>2.94</span></div>
<div class="c" style="left:741px;top:630px;width:71px;height:25px;background:#f0f7fb;"><span>3.18</span></div>
<div class="c" style="left:813px;top:630px;width:72px;height:25px;background:#f0f7fb;"><span>2.29</span></div>
<div class="c" style="left:886px;top:630px;width:40px;height:25px;"><span><span style="color:#dc2020;position:relative;top:-1px">胜</span></span></div>
<div class="c" style="left:927px;top:630px;width:41px;height:25px;"><span><span style="color:#dc2020;position:relative;top:-1px">赢</span></span></div>
<div class="c" style="left:969px;top:630px;width:62px;height:25px;"><span><span style="color:#1414c0;position:relative;top:-1px">小</span></span></div>
<div class="a" style="left:5px;top:656px;width:1026px;height:25px;background:#ffffff;"></div>
<div class="c ty" style="left:5px;top:656px;width:80px;height:25px;background:#0a45b8"><span>韩K联</span></div>
<div class="c" style="left:86px;top:656px;width:82px;height:25px;"><span>25-06-28</span></div>
<div class="c" style="left:169px;top:656px;width:80px;height:25px;"><span><span class="bd">1</span><span style="color:#222">FC安养</span></span></div>
<div class="c" style="left:250px;top:656px;width:98px;height:25px;"><span><span style="color:#dc2020">1-2</span>(1-2)</span></div>
<div class="c" style="left:349px;top:656px;width:39px;height:25px;"><span>2-4</span></div>
<div class="c" style="left:389px;top:656px;width:80px;height:25px;"><span><span style="color:#1a781a">光州FC</span></span></div>
<div class="c" style="left:470px;top:656px;width:52px;height:25px;background:#fdf9f6;"><span>0.78</span></div>
<div class="c" style="left:523px;top:656px;width:90px;height:25px;background:#fdf9f6;"><span>平手</span></div>
<div class="c" style="left:614px;top:656px;width:55px;height:25px;background:#fdf9f6;"><span>1.12</span></div>
<div class="c" style="left:670px;top:656px;width:70px;height:25px;background:#f0f7fb;"><span>2.54</span></div>
<div class="c" style="left:741px;top:656px;width:71px;height:25px;background:#f0f7fb;"><span>3.17</span></div>
<div class="c" style="left:813px;top:656px;width:72px;height:25px;background:#f0f7fb;"><span>2.67</span></div>
<div class="c" style="left:886px;top:656px;width:40px;height:25px;"><span><span style="color:#dc2020;position:relative;top:-1px">胜</span></span></div>
<div class="c" style="left:927px;top:656px;width:41px;height:25px;"><span><span style="color:#dc2020;position:relative;top:-1px">赢</span></span></div>
<div class="c" style="left:969px;top:656px;width:62px;height:25px;"><span><span style="color:#dc2020;position:relative;top:-1px">大</span></span></div>
<div class="a" style="left:5px;top:682px;width:1026px;height:25px;background:#efefef;"></div>
<div class="c ty" style="left:5px;top:682px;width:80px;height:25px;background:#0a45b8"><span>韩K联</span></div>
<div class="c" style="left:86px;top:682px;width:82px;height:25px;"><span>25-06-22</span></div>
<div class="c" style="left:169px;top:682px;width:80px;height:25px;"><span><span style="color:#1a781a">光州FC</span></span></div>
<div class="c" style="left:250px;top:682px;width:98px;height:25px;"><span><span style="color:#dc2020">2-2</span>(0-0)</span></div>
<div class="c" style="left:349px;top:682px;width:39px;height:25px;"><span>4-8</span></div>
<div class="c" style="left:389px;top:682px;width:80px;height:25px;"><span><span style="color:#222">大田市民</span></span></div>
<div class="c" style="left:470px;top:682px;width:52px;height:25px;background:#fdf9f6;"><span>0.90</span></div>
<div class="c" style="left:523px;top:682px;width:90px;height:25px;background:#fdf9f6;"><span>平/半</span></div>
<div class="c" style="left:614px;top:682px;width:55px;height:25px;background:#fdf9f6;"><span>0.99</span></div>
<div class="c" style="left:670px;top:682px;width:70px;height:25px;background:#f0f7fb;"><span>2.16</span></div>
<div class="c" style="left:741px;top:682px;width:71px;height:25px;background:#f0f7fb;"><span>3.21</span></div>
<div class="c" style="left:813px;top:682px;width:72px;height:25px;background:#f0f7fb;"><span>3.21</span></div>
<div class="c" style="left:886px;top:682px;width:40px;height:25px;"><span><span style="color:#1a781a;position:relative;top:-1px">平</span></span></div>
<div class="c" style="left:927px;top:682px;width:41px;height:25px;"><span><span style="color:#1414c0;position:relative;top:-1px">输</span></span></div>
<div class="c" style="left:969px;top:682px;width:62px;height:25px;"><span><span style="color:#dc2020;position:relative;top:-1px">大</span></span></div>
<div class="a" style="left:5px;top:708px;width:1026px;height:25px;background:#fff;"></div>
<div class="c sm" style="left:5px;top:708px;width:1026px;height:25px;padding-top:1px;box-sizing:border-box;letter-spacing:0.2px"><span>近<span style="color:#dc2020">10</span>场,胜4平2负4, 胜率:<span style="color:#dc2020">40%</span> 让胜率:<span style="color:#dc2020">40%</span> 大率:<span style="color:#dc2020">40%</span> 单率:<span style="color:#dc2020">60%</span></span></div>
<div class="a" style="left:4px;top:408px;width:1028px;height:1px;background:#c6c6c6;"></div>
<div class="a" style="left:4px;top:447px;width:1028px;height:1px;background:#c6c6c6;"></div>
<div class="a" style="left:4px;top:707px;width:1028px;height:1px;background:#c6c6c6;"></div>
<div class="a" style="left:4px;top:733px;width:1028px;height:1px;background:#c6c6c6;"></div>
<div class="a" style="left:469px;top:428px;width:562px;height:1px;background:#c6c6c6;"></div>
<div class="a" style="left:85px;top:473px;width:946px;height:1px;background:#c6c6c6;"></div>
<div class="a" style="left:5px;top:473px;width:80px;height:1px;background:#c8cbe8;"></div>
<div class="a" style="left:85px;top:499px;width:946px;height:1px;background:#c6c6c6;"></div>
<div class="a" style="left:5px;top:499px;width:80px;height:1px;background:#c8cbe8;"></div>
<div class="a" style="left:85px;top:525px;width:946px;height:1px;background:#c6c6c6;"></div>
<div class="a" style="left:5px;top:525px;width:80px;height:1px;background:#c8cbe8;"></div>
<div class="a" style="left:85px;top:551px;width:946px;height:1px;background:#c6c6c6;"></div>
<div class="a" style="left:5px;top:551px;width:80px;height:1px;background:#c8cbe8;"></div>
<div class="a" style="left:85px;top:577px;width:946px;height:1px;background:#c6c6c6;"></div>
<div class="a" style="left:5px;top:577px;width:80px;height:1px;background:#c8cbe8;"></div>
<div class="a" style="left:85px;top:603px;width:946px;height:1px;background:#c6c6c6;"></div>
<div class="a" style="left:5px;top:603px;width:80px;height:1px;background:#c8cbe8;"></div>
<div class="a" style="left:85px;top:629px;width:946px;height:1px;background:#c6c6c6;"></div>
<div class="a" style="left:5px;top:629px;width:80px;height:1px;background:#c8cbe8;"></div>
<div class="a" style="left:85px;top:655px;width:946px;height:1px;background:#c6c6c6;"></div>
<div class="a" style="left:5px;top:655px;width:80px;height:1px;background:#c8cbe8;"></div>
<div class="a" style="left:85px;top:681px;width:946px;height:1px;background:#c6c6c6;"></div>
<div class="a" style="left:5px;top:681px;width:80px;height:1px;background:#c8cbe8;"></div>
<div class="a" style="left:4px;top:408px;width:1px;height:299px;background:#c6c6c6;"></div>
<div class="a" style="left:85px;top:408px;width:1px;height:299px;background:#c6c6c6;"></div>
<div class="a" style="left:168px;top:408px;width:1px;height:299px;background:#c6c6c6;"></div>
<div class="a" style="left:249px;top:408px;width:1px;height:299px;background:#c6c6c6;"></div>
<div class="a" style="left:348px;top:408px;width:1px;height:299px;background:#c6c6c6;"></div>
<div class="a" style="left:388px;top:408px;width:1px;height:299px;background:#c6c6c6;"></div>
<div class="a" style="left:469px;top:408px;width:1px;height:299px;background:#c6c6c6;"></div>
<div class="a" style="left:522px;top:428px;width:1px;height:279px;background:#c6c6c6;"></div>
<div class="a" style="left:613px;top:428px;width:1px;height:279px;background:#c6c6c6;"></div>
<div class="a" style="left:669px;top:408px;width:1px;height:299px;background:#c6c6c6;"></div>
<div class="a" style="left:740px;top:428px;width:1px;height:279px;background:#c6c6c6;"></div>
<div class="a" style="left:812px;top:428px;width:1px;height:279px;background:#c6c6c6;"></div>
<div class="a" style="left:885px;top:408px;width:1px;height:299px;background:#c6c6c6;"></div>
<div class="a" style="left:926px;top:428px;width:1px;height:279px;background:#c6c6c6;"></div>
<div class="a" style="left:968px;top:428px;width:1px;height:279px;background:#c6c6c6;"></div>
<div class="a" style="left:1031px;top:408px;width:1px;height:299px;background:#c6c6c6;"></div>
<div class="a" style="left:4px;top:707px;width:1px;height:27px;background:#c6c6c6;"></div>
<div class="a" style="left:1031px;top:707px;width:1px;height:27px;background:#c6c6c6;"></div>
<div class="sel" style="left:509px;top:409px;width:58px;height:17px;font-size:13px"><span>Crow*</span><svg class="chev" width="10" height="7" viewBox="0 0 10 7"><path d="M1.2 1.2 L5 5 L8.8 1.2" fill="none" stroke="#000" stroke-width="2"/></svg></div>
<div class="sel" style="left:578px;top:409px;width:49px;height:17px;font-size:13px"><span>终指</span><svg class="chev" width="10" height="7" viewBox="0 0 10 7"><path d="M1.2 1.2 L5 5 L8.8 1.2" fill="none" stroke="#000" stroke-width="2"/></svg></div>
<div class="sel" style="left:713px;top:409px;width:68px;height:17px;font-size:13px"><span>平均值</span><svg class="chev" width="10" height="7" viewBox="0 0 10 7"><path d="M1.2 1.2 L5 5 L8.8 1.2" fill="none" stroke="#000" stroke-width="2"/></svg></div>
<div class="sel" style="left:790px;top:409px;width:49px;height:17px;font-size:13px"><span>终指</span><svg class="chev" width="10" height="7" viewBox="0 0 10 7"><path d="M1.2 1.2 L5 5 L8.8 1.2" fill="none" stroke="#000" stroke-width="2"/></svg></div>
<div class="sel" style="left:933px;top:409px;width:49px;height:17px;font-size:13px"><span>全场</span><svg class="chev" width="10" height="7" viewBox="0 0 10 7"><path d="M1.2 1.2 L5 5 L8.8 1.2" fill="none" stroke="#000" stroke-width="2"/></svg></div>
</body></html>
